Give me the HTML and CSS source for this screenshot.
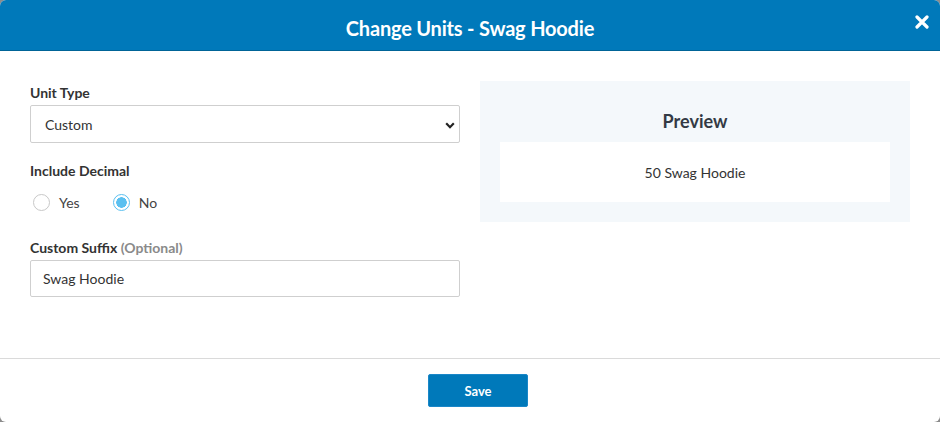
FILE: index.html
```html
<!DOCTYPE html>
<html>
<head>
<meta charset="utf-8">
<link rel="stylesheet" href="styles.css">
</head>
<body>
<div class="modal">
  <header class="modal-header">
    <h1 class="modal-title">Change Units - Swag Hoodie</h1>
    <button class="close-btn" aria-label="Close">
      <svg width="14" height="14" viewBox="0 0 14 14"><path d="M2 2L12 12M12 2L2 12" stroke="#fff" stroke-width="3.2" stroke-linecap="round"/></svg>
    </button>
  </header>
  <main class="modal-body">
    <div class="form-col">
      <div class="field">
        <label class="field-label">Unit Type</label>
        <div class="select-wrap">
          <select class="select">
            <option>Custom</option>
          </select>
          <svg class="chevron" width="10" height="7" viewBox="0 0 10 7"><path d="M1.2 1.3L5 5.2L8.8 1.3" fill="none" stroke="#222" stroke-width="2.2"/></svg>
        </div>
      </div>
      <div class="field">
        <label class="field-label">Include Decimal</label>
        <div class="radio-row">
          <label class="radio"><span class="radio-circle"></span><span>Yes</span></label>
          <label class="radio"><span class="radio-circle checked"></span><span>No</span></label>
        </div>
      </div>
      <div class="field">
        <label class="field-label">Custom Suffix <span class="optional">(Optional)</span></label>
        <input class="text-input" type="text" value="Swag Hoodie">
      </div>
    </div>
    <section class="preview">
      <h2 class="preview-title">Preview</h2>
      <div class="preview-box">50 Swag Hoodie</div>
    </section>
  </main>
  <footer class="modal-footer">
    <button class="save-btn">Save</button>
  </footer>
</div>
</body>
</html>
```

FILE: styles.css
```css
* { box-sizing: border-box; }
html, body {
  margin: 0;
  padding: 0;
  background: #8c8c8c;
}
body {
  font-family: Lato, "Open Sans", "Liberation Sans", sans-serif;
  color: #333;
}
.modal {
  width: 940px;
  height: 422px;
  background: #fff;
  border-radius: 6px;
  overflow: hidden;
  display: flex;
  flex-direction: column;
}
.modal-header {
  height: 51px;
  background: #0079ba;
  border-bottom: 1px solid #006497;
  display: flex;
  align-items: center;
  justify-content: center;
  position: relative;
}
.modal-title {
  margin: 0;
  color: #fff;
  font-size: 20px;
  font-weight: 700;
  letter-spacing: -0.2px;
  padding-top: 6px;
}
.close-btn {
  position: absolute;
  right: 11px;
  top: 15px;
  background: none;
  border: 0;
  padding: 0;
  width: 14px;
  height: 14px;
  display: flex;
}
.modal-body {
  height: 308px;
  padding: 30px 30px 0;
  display: grid;
  grid-template-columns: 430px 430px;
  column-gap: 20px;
  align-items: start;
  border-bottom: 1px solid #dadada;
}
.form-col {
  display: flex;
  flex-direction: column;
}
.field { display: flex; flex-direction: column; }
.field + .field { margin-top: 16px; }
.field-label {
  font-size: 14px;
  font-weight: 700;
  line-height: 18px;
  margin-top: 3px;
  margin-bottom: 3px;
  color: #333;
}
.optional { color: #8a8a8a; }
.select-wrap { position: relative; }
.select {
  appearance: none;
  -webkit-appearance: none;
  width: 430px;
  height: 38px;
  border: 1px solid #cfcfcf;
  border-radius: 2px;
  background: #fff;
  font-family: inherit;
  font-size: 14px;
  color: #333;
  padding: 0 14px;
  outline: none;
}
.chevron {
  position: absolute;
  right: 5px;
  top: 17px;
}
.radio-row {
  display: flex;
  gap: 33px;
  height: 22px;
  align-items: center;
  margin-top: 8px;
  margin-bottom: 7px;
  padding-left: 3px;
}
.radio {
  display: flex;
  align-items: center;
  gap: 9px;
  font-size: 14px;
  color: #444;
}
.radio-circle {
  width: 17px;
  height: 17px;
  border-radius: 50%;
  border: 1px solid #c8c8c8;
  background: #fff;
  display: inline-block;
}
.radio-circle.checked {
  border: 1.5px solid #5bc0f0;
  background: radial-gradient(circle, #5bc0f0 0 5px, #fff 5.5px);
}
.text-input {
  width: 430px;
  height: 37px;
  border: 1px solid #cfcfcf;
  border-radius: 2px;
  font-family: inherit;
  font-size: 14px;
  color: #333;
  padding: 0 12px;
  outline: none;
}
.preview {
  background: #f4f8fb;
  padding: 20px 20px 20px;
}
.preview-title {
  margin: 0;
  height: 41px;
  display: flex;
  align-items: center;
  justify-content: center;
  font-size: 18px;
  font-weight: 700;
  color: #333a44;
  padding-bottom: 1px;
}
.preview-box {
  background: #fff;
  height: 60px;
  display: flex;
  align-items: center;
  justify-content: center;
  font-size: 14px;
  color: #333;
}
.modal-footer {
  flex: 1;
  display: flex;
  justify-content: center;
  padding-top: 15px;
  padding-left: 16px;
}
.save-btn {
  width: 100px;
  height: 33px;
  background: #0079ba;
  border: 1px solid #1a87c8;
  border-radius: 2px;
  color: #fff;
  font-family: inherit;
  font-size: 13px;
  font-weight: 700;
}
```
